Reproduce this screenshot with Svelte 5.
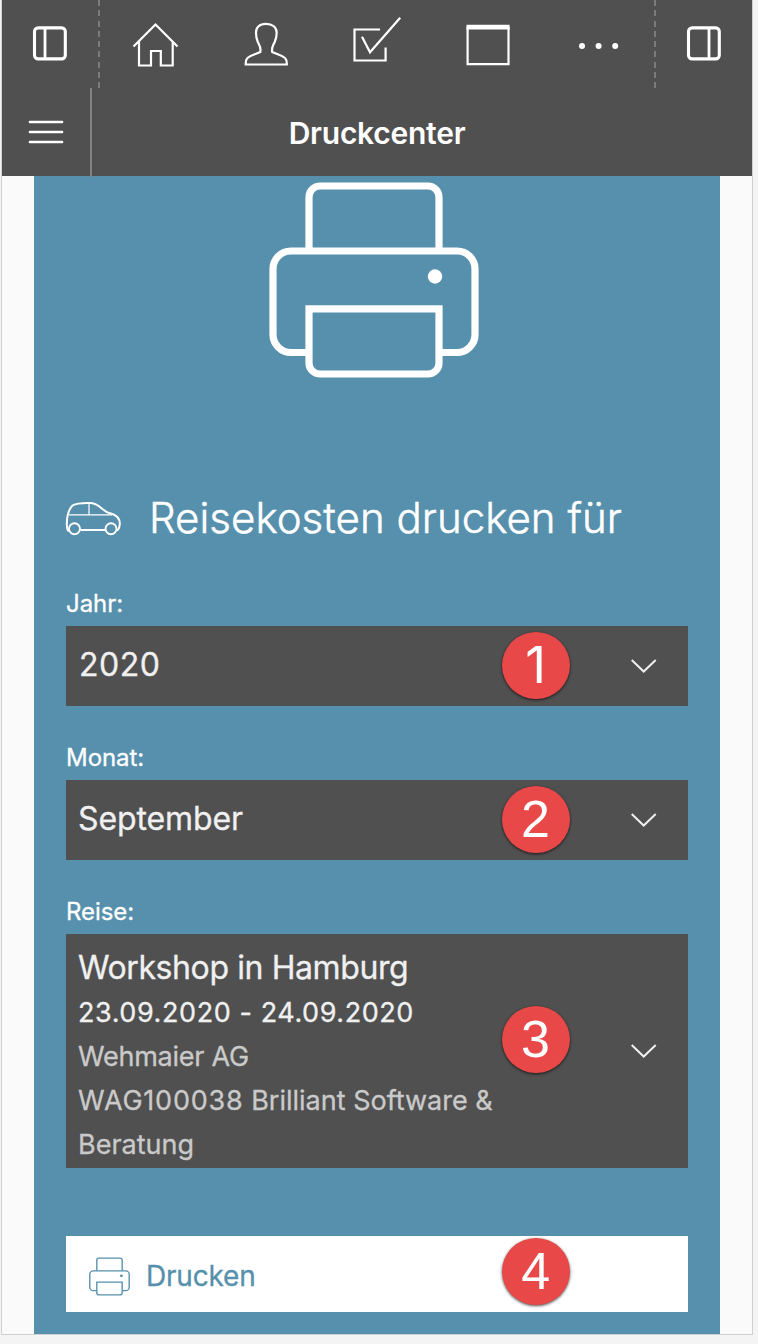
<script>
  const fields = [
    { label: 'Jahr:', value: '2020', badge: 1, cls: 'year' },
    { label: 'Monat:', value: 'September', badge: 2, cls: 'month' }
  ];
</script>

{#snippet printer(weight)}
  <svg class="printer" viewBox="269 182 210 196" fill="none" stroke="currentColor" stroke-width={weight}>
    <path d="M309 251V197a11 11 0 0 1 11-11h108a11 11 0 0 1 11 11V251" />
    <path d="M309 352.5H291a18 18 0 0 1-18-18V269a18 18 0 0 1 18-18h166a18 18 0 0 1 18 18v65.5a18 18 0 0 1-18 18h-18" />
    <path d="M309 308.8H439V363a11 11 0 0 1-11 11H320a11 11 0 0 1-11-11Z" />
    <circle cx="435" cy="276.5" r="7.2" fill="currentColor" stroke="none" />
  </svg>
{/snippet}

{#snippet chevron()}
  <svg class="chevron" width="28" height="16" viewBox="0 0 28 16" fill="none" stroke="currentColor" stroke-width="2"><path d="M1.7 2L13.7 13.500L25.7 2" /></svg>
{/snippet}

<div class="frame">
  <header>
    <nav>
      <button class="side left" aria-label="Links">
        <svg width="36" height="36" viewBox="0 0 36 36" fill="none" stroke="currentColor">
          <rect x="2.5" y="1.9" width="30.8" height="31" rx="3.6" stroke-width="3.1" />
          <path d="M13 2V33" stroke-width="2.8" />
        </svg>
      </button>
      <div class="tabs">
        <button aria-label="Start">
          <svg width="48" height="48" viewBox="131 21 48 48" fill="none" stroke="currentColor" stroke-width="2.2">
            <path d="M133.5 46.5L155.5 24.5L177.5 46.5M139 41.5V65.5H151V51H160.8V65.5H172.7V41.5" />
          </svg>
        </button>
        <button aria-label="Profil">
          <svg width="48" height="48" viewBox="242 21 48 48" fill="none" stroke="currentColor" stroke-width="2.2">
            <path d="M266 23.8C259.5 23.8 256 27.5 256 32.5C256 36 256.400 39 257.800 42C259.500 45.500 261.300 47.500 260.300 52C255.500 54.500 251 55 247.500 58C245.500 59.800 245.700 61.500 245.700 64.500H286.800C286.800 61.500 287 59.800 285 58C281.500 55 277 54.500 272.200 52C271.200 47.500 273 45.500 274.700 42C276 39 276.700 36 276.700 32.500C276.700 27.500 272.500 23.800 266 23.800Z" />
          </svg>
        </button>
        <button aria-label="Aufgaben">
          <svg width="50" height="48" viewBox="352 16 50 48" fill="none" stroke="currentColor" stroke-width="2.2">
            <path d="M380 29.500H354.500V60.500H385.600V47.500M362 36.800L370 52.300L400.200 17.800" />
          </svg>
        </button>
        <button aria-label="Kalender">
          <svg width="46" height="44" viewBox="465 23 46 44" fill="none" stroke="currentColor" stroke-width="2.2">
            <path d="M467.600 27V64.200H508.500V27" /><path d="M466.500 27.200H509.600" stroke-width="4.800" />
          </svg>
        </button>
        <button aria-label="Mehr">
          <svg width="44" height="10" viewBox="577 41 44 10" fill="currentColor">
            <circle cx="582" cy="46" r="3" /><circle cx="598.600" cy="46" r="3" /><circle cx="615.200" cy="46" r="3" />
          </svg>
        </button>
      </div>
      <button class="side right" aria-label="Rechts">
        <svg width="36" height="36" viewBox="0 0 36 36" fill="none" stroke="currentColor">
          <rect x="2.5" y="1.9" width="30.8" height="31" rx="3.6" stroke-width="3.1" />
          <path d="M23 2V33" stroke-width="2.8" />
        </svg>
      </button>
    </nav>
    <div class="titlebar">
      <button class="menu" aria-label="Menü">
        <svg width="36" height="26" viewBox="0 0 36 26" stroke="currentColor" stroke-width="2.7" stroke-linecap="round"><path d="M2 3H34M2 13H34M2 23H34" /></svg>
      </button>
      <h1><span>Druckcenter</span></h1>
    </div>
  </header>

  <main>
    <div class="hero">{@render printer(7.2)}</div>
    <h2>
      <svg width="56" height="35" viewBox="65 501 56 35" fill="none" stroke="currentColor" stroke-width="2">
        <path d="M68.500 531.500C67 529.500 66.800 527 66.800 523.500C67 515 69 509 72.500 505.500C76 503.500 84 502.800 91 503C100 503.500 103 512.500 111 513.500C117.500 515.500 120 518.500 119.800 524C119.500 528 119 530 116.500 530.500M80.500 530H105" />
        <path d="M69 514.800H112M89 503V514.800" stroke-width="1.200" />
        <circle cx="74.500" cy="528.700" r="5.500" stroke-width="1.900" /><circle cx="111" cy="528.700" r="5.500" stroke-width="1.900" />
      </svg>
      <span>Reisekosten drucken für</span>
    </h2>

    {#each fields as f}
      <div class="field">
        <div class="label"><span>{f.label}</span></div>
        <div class="select">
          <span class="value {f.cls}">{f.value}</span>
          <b class="badge" class:one={f.badge === 1}>{f.badge}</b>
          {@render chevron()}
        </div>
      </div>
    {/each}
    <div class="field">
      <div class="label"><span>Reise:</span></div>
      <div class="select trip">
        <div class="lines">
          <div class="name">Workshop in Hamburg</div>
          <div class="date">23.09.2020 - 24.09.2020</div>
          <div class="client">Wehmaier AG</div>
          <div><span class="code">WAG100038</span> Brilliant Software &amp;</div>
          <div>Beratung</div>
        </div>
        <b class="badge">3</b>
        {@render chevron()}
      </div>
    </div>

    <button class="print">
      {@render printer(7)}
      <span>Drucken</span>
      <b class="badge">4</b>
    </button>
  </main>
</div>

<style>
  :global(body) { background: #f4f4f4; }
  .frame {
    box-sizing: border-box; width: 752px; height: 1335px; margin-left: 1px;
    border: 1px solid #d0d0d0; border-top: 0; background: #fafafa;
    font-family: Inter, "Liberation Sans", sans-serif; color: #fff;
    overflow: hidden;
  }
  button { border: 0; padding: 0; background: none; color: inherit; font: inherit; display: flex; align-items: center; justify-content: center; }
  svg { display: block; flex: none; }
  header { background: #505050; height: 176px; }
  nav { display: grid; grid-template-columns: 98px 1fr 98px; height: 88px; }
  .side { background: repeating-linear-gradient(#7b7b7b 0 6px, transparent 6px 10.25px) no-repeat; background-size: 2px 88px; }
  .left { background-position: right top; padding-right: 2px; }
  .right { background-position: left top; padding-left: 1px; }
  .tabs { display: grid; grid-template-columns: repeat(5, 1fr); }
  .tabs button:nth-child(1), .tabs button:nth-child(2) { padding-top: 2px; }
  .tabs button:nth-child(3) { padding-bottom: 8px; }
  .tabs button:nth-child(4) { padding-top: 2px; }
  .tabs button:nth-child(5) { padding-top: 4px; }
  .titlebar { display: grid; grid-template-columns: 90px 1fr; height: 88px; }
  .menu { box-sizing: border-box; border-right: 2px solid #828282; padding-bottom: 1px; }
  h1 { margin: 0; padding: 1px 90px 0 0; text-align: center; font-size: 30px; font-weight: 600; line-height: 88px; letter-spacing: -.25px; }
  main { box-sizing: border-box; width: 686px; height: 1158px; margin-left: 32px; padding: 6px 32px 0; background: #5690ac; }
  .hero { display: flex; justify-content: center; height: 306px; padding-right: 6px; }
  .hero :global(.printer) { width: 210px; height: 196px; }
  h2 { display: flex; align-items: center; gap: 28px; height: 60px; margin: 0 0 32px -1px; font-size: 42px; font-weight: 300; white-space: nowrap; }
  h2 span { padding-bottom: 2px; letter-spacing: .03px; -webkit-text-stroke: .5px currentColor; }
  .label { height: 46px; line-height: 48px; font-size: 24px; letter-spacing: -.05px; }
  .label, .select, .print { -webkit-text-stroke: .3px currentColor; }
  .field { margin-bottom: 28px; }
  .select { position: relative; display: flex; align-items: center; justify-content: space-between; height: 80px; padding: 0 30px 0 12px; background: #505050; color: #f0f0f0; }
  .value { font-size: 32px; padding-bottom: 3px; letter-spacing: -.1px; }
  .year { letter-spacing: .55px; padding-left: 1px; }
  .badge {
    position: absolute; left: 436px; top: 6px; width: 68px; height: 67px; border-radius: 50%;
    background: #e94848; color: #fff; box-shadow: 0 1px 3px rgba(0, 0, 0, .7);
    font: 400 52px/66px "Liberation Sans", sans-serif; text-align: center; text-indent: -1px;
    -webkit-text-stroke: 0;
  }
  .one { font-family: Inter, sans-serif; font-size: 51px; }
  .select.trip { height: 234px; }
  .select.trip .badge { top: 72px; }
  .lines { font-size: 27px; line-height: 44px; color: #cacaca; padding-top: 11px; height: 223px; white-space: nowrap; }
  .lines .name { font-size: 32px; line-height: 46px; color: #f0f0f0; letter-spacing: -.4px; }
  .lines .date { color: #f0f0f0; letter-spacing: .58px; }
  .client { letter-spacing: -.25px; }
  .code { letter-spacing: .8px; }
  .print { position: relative; box-sizing: border-box; width: 622px; height: 76px; margin-top: 68px; padding-left: 23px; justify-content: flex-start; gap: 16px; background: #fff; color: #5690ac; font-size: 28px; letter-spacing: -.2px; }
  .print :global(.printer) { width: 41px; height: 39px; margin-top: 5px; }
  .print span { padding-top: 3px; }
  .print .badge { top: 2px; }
</style>
